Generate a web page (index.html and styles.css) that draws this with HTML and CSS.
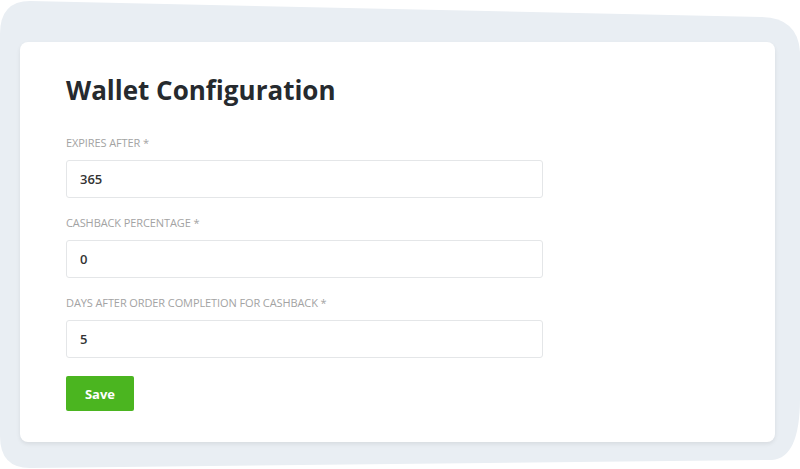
FILE: index.html
```html
<!DOCTYPE html>
<html lang="en">

<head>
    <meta charset="UTF-8">
    <meta name="viewport" content="width=device-width, initial-scale=1.0">
    <title>Wallet Configuration</title>
    <link rel="stylesheet" href="styles.css">
</head>

<body>
    <!-- Tilted backdrop behind the card -->
    <svg class="backdrop" width="800" height="469" viewBox="0 0 800 469">
        <path d="M30 1 L762 17 Q798 18 800 52 L800 398 Q800 458 772 460 L30 468 Q0 468 0 436 L0 34 Q0 1 30 1 Z" fill="#e9eef3" />
    </svg>

    <div class="page">
        <div class="config-card">
            <h1 class="config-title">Wallet Configuration</h1>
            <form class="config-form">
                <div class="field">
                    <label class="field-label">Expires After *</label>
                    <input class="field-input" type="text" value="365">
                </div>
                <div class="field">
                    <label class="field-label">Cashback Percentage *</label>
                    <input class="field-input" type="text" value="0">
                </div>
                <div class="field">
                    <label class="field-label">Days After Order Completion For Cashback *</label>
                    <input class="field-input" type="text" value="5">
                </div>
                <button type="button" class="save-btn">Save</button>
            </form>
        </div>
    </div>
</body>

</html>
```

FILE: styles.css
```css
body {
    font-family: 'Open Sans', 'Noto Sans', sans-serif;
    background-color: #ffffff;
    margin: 0;
    width: 800px;
    height: 469px;
    position: relative;
    overflow: hidden;
}

.backdrop {
    position: absolute;
    top: 0;
    left: 0;
}

.page {
    position: relative;
    padding: 42px 25px 0 20px;
}

.config-card {
    background-color: #ffffff;
    border-radius: 8px;
    box-shadow: 0 2px 4px rgba(0, 0, 0, 0.08);
    height: 400px;
    box-sizing: border-box;
    padding: 31px 46px;
}

.config-title {
    font-size: 26px;
    font-weight: 700;
    color: #262a2e;
    margin: 0 0 29px;
    line-height: 34px;
}

.field {
    display: flex;
    flex-direction: column;
    margin-bottom: 18px;
}

.field-label {
    font-size: 11px;
    color: #a3a3a3;
    text-transform: uppercase;
    letter-spacing: -0.1px;
    line-height: 14px;
    margin-bottom: 10px;
}

.field-input {
    width: 477px;
    height: 38px;
    box-sizing: border-box;
    border: 1px solid #e4e6e8;
    border-radius: 3px;
    padding: 0 13px;
    font-family: inherit;
    font-size: 13px;
    font-weight: 600;
    color: #333333;
    outline: none;
}

.save-btn {
    display: block;
    width: 68px;
    height: 35px;
    margin-top: 1px;
    background-color: #4bb520;
    border: none;
    border-radius: 2px;
    color: #ffffff;
    font-family: inherit;
    font-size: 13px;
    font-weight: 700;
    cursor: pointer;
}
```
